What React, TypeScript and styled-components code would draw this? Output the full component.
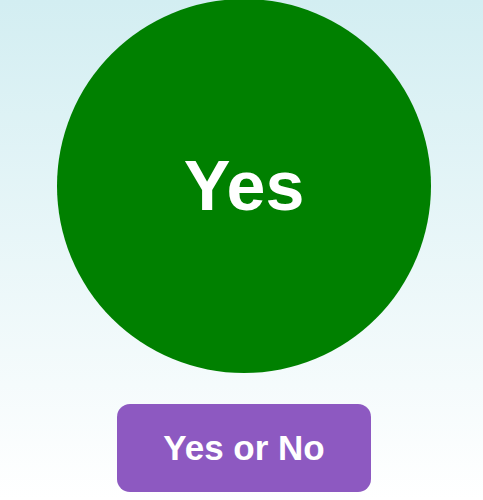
import React, { useState } from 'react';
import styled, { createGlobalStyle } from 'styled-components';

const GlobalStyle = createGlobalStyle`
  html, body {
    margin: 0;
    padding: 0;
    height: 100%;
  }
  body {
    font-family: "Liberation Sans", Arial, sans-serif;
    background: linear-gradient(to bottom, #d3eef2 0%, #ffffff 100%);
    background-attachment: fixed;
    overflow: hidden;
  }
`;

const Page = styled.div`
  display: flex;
  flex-direction: column;
  align-items: center;
  padding-left: 5px;
  margin-top: -1px;
  gap: 31px;
`;

const Circle = styled.div<{ $answer: string }>`
  width: 374px;
  height: 374px;
  border-radius: 50%;
  background: ${(props) => (props.$answer === 'Yes' ? '#008000' : '#d32f2f')};
  display: flex;
  align-items: center;
  justify-content: center;
  color: #ffffff;
  font-size: 70px;
  font-weight: bold;
`;

const AskButton = styled.button`
  width: 254px;
  height: 88px;
  border: none;
  border-radius: 13px;
  background: #8d59c1;
  color: #ffffff;
  font-family: "Liberation Sans", Arial, sans-serif;
  font-size: 35px;
  font-weight: bold;
  cursor: pointer;
`;

export default function App() {
  const [answer, setAnswer] = useState('Yes');

  return (
    <>
      <GlobalStyle />
      <Page>
        <Circle $answer={answer}>{answer}</Circle>
        <AskButton onClick={() => setAnswer(Math.random() < 0.5 ? 'Yes' : 'No')}>
          Yes or No
        </AskButton>
      </Page>
    </>
  );
}
